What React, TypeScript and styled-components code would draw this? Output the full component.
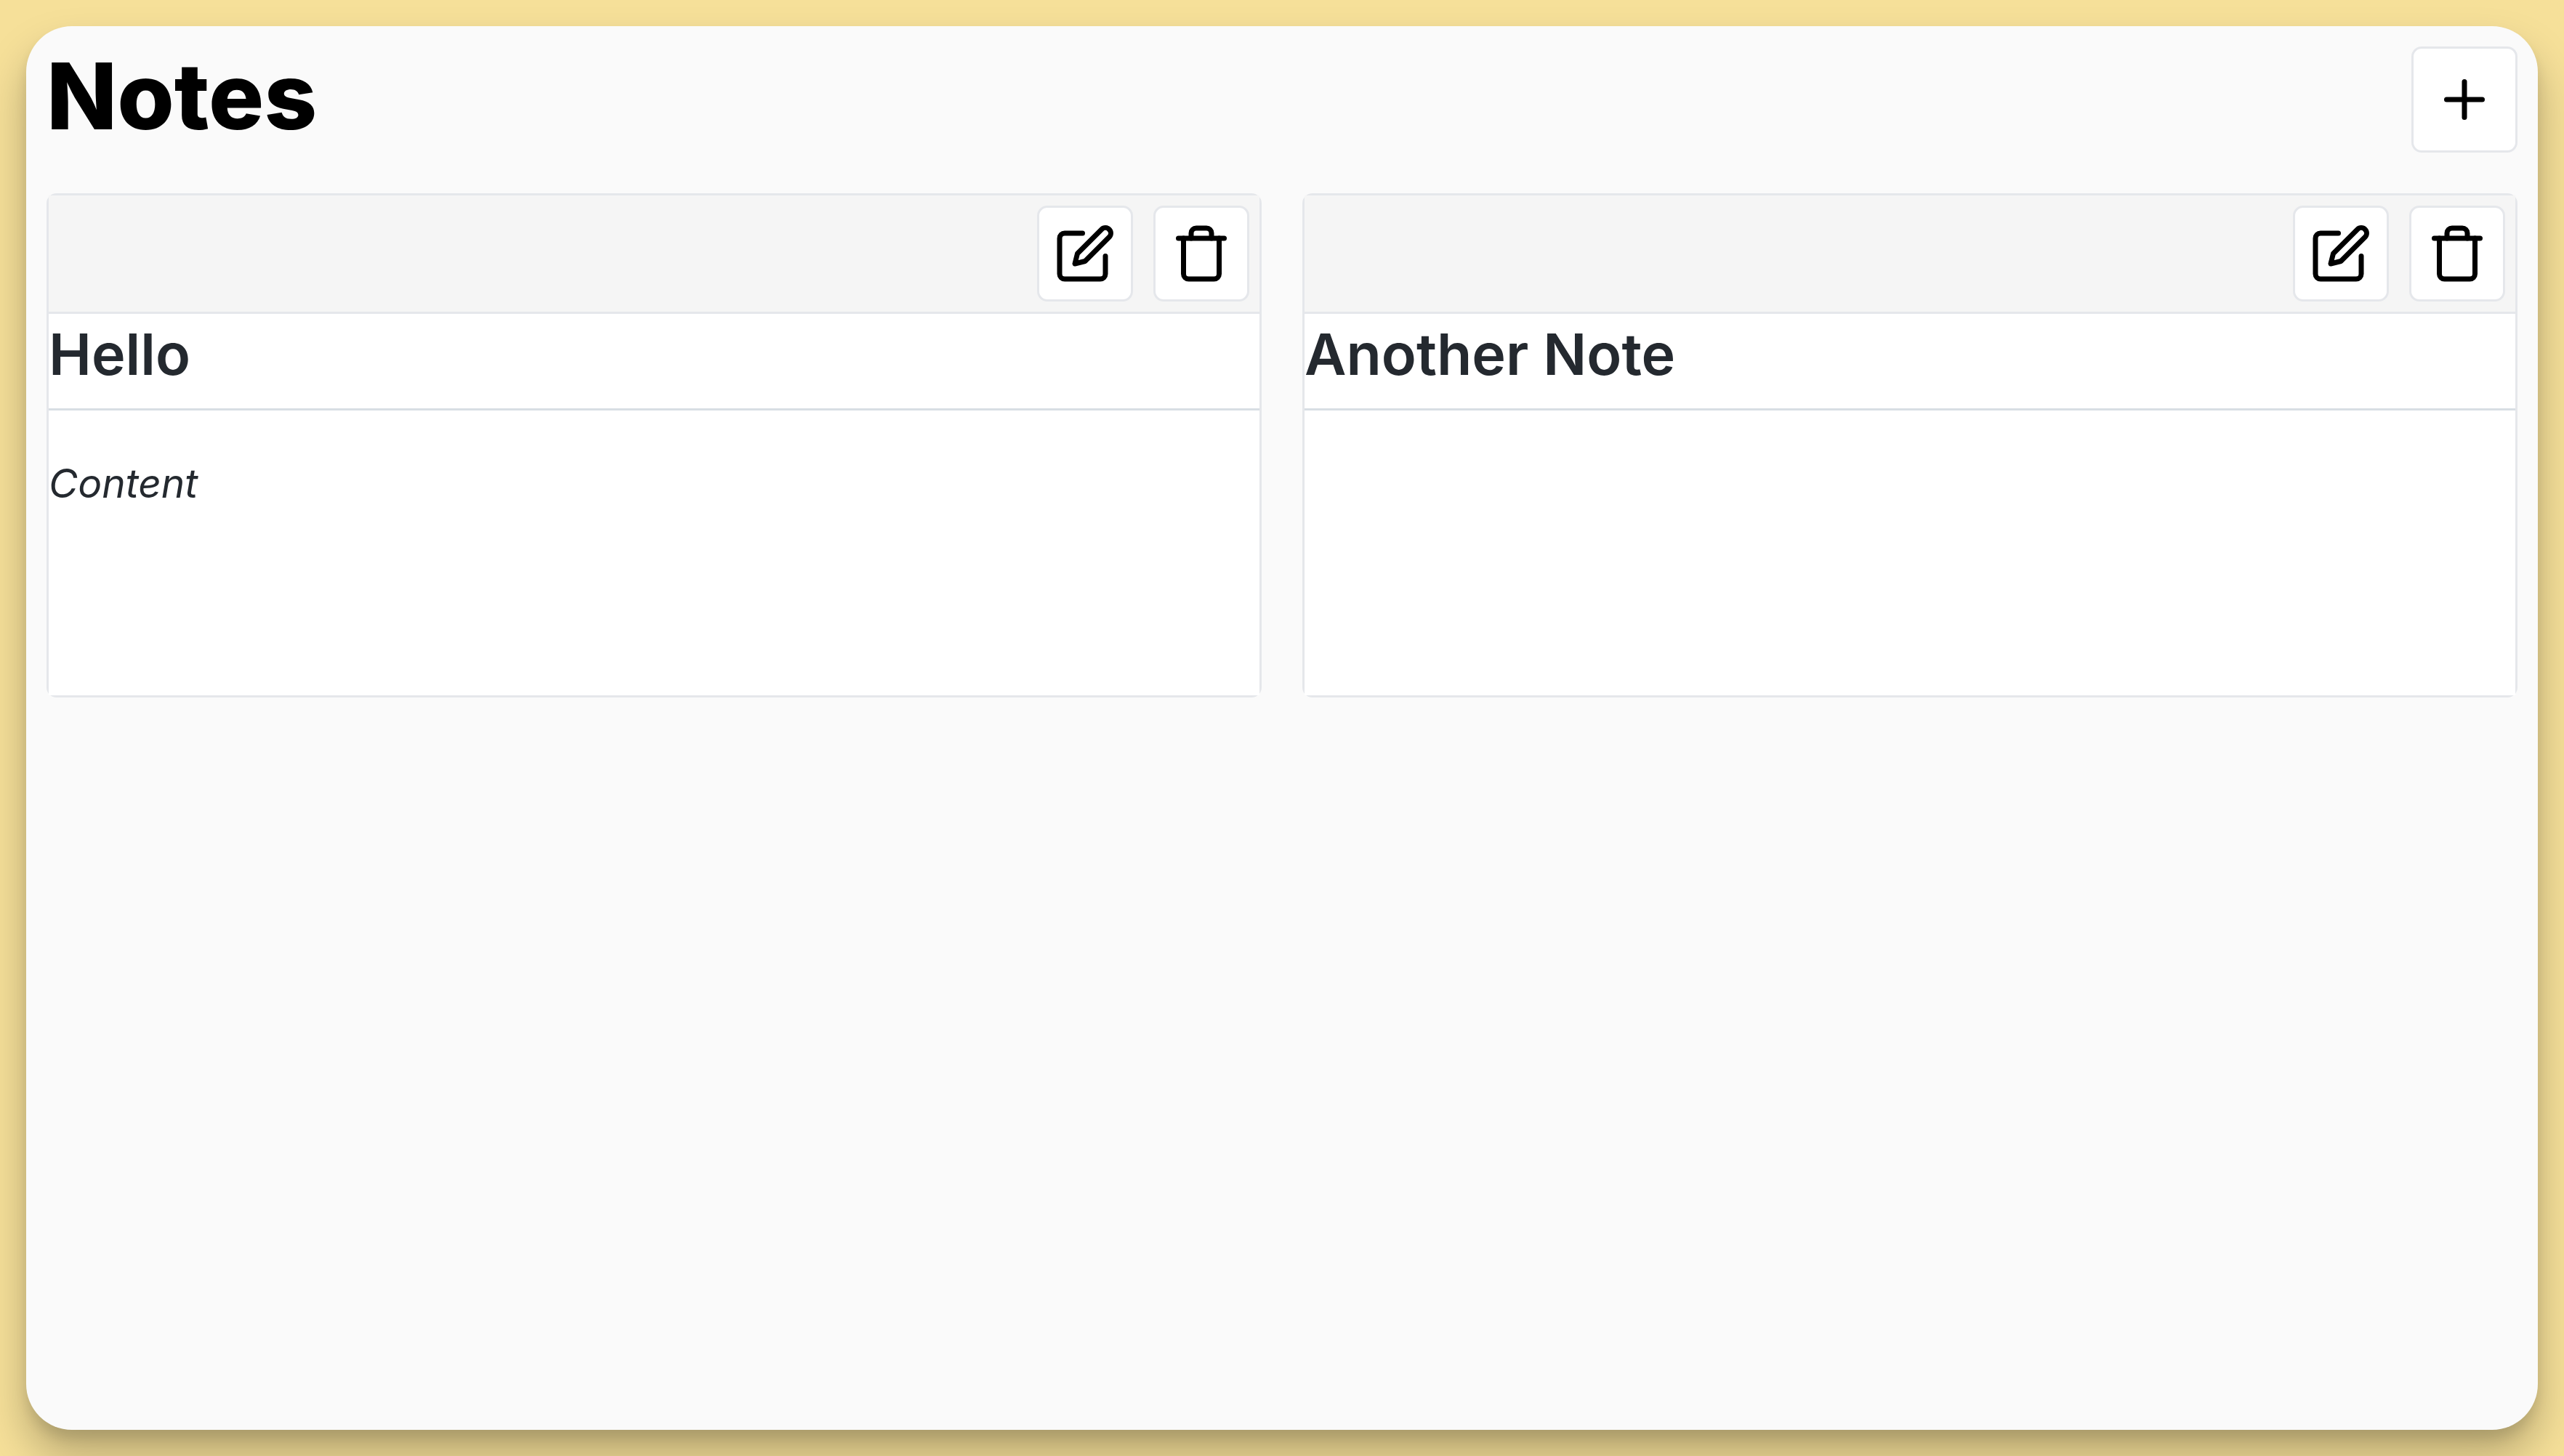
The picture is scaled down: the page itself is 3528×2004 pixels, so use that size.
import React from "react";
import styled, { createGlobalStyle } from "styled-components";
import { FiEdit, FiPlus, FiTrash } from "react-icons/fi";

const GlobalStyle = createGlobalStyle`
  *, *::before, *::after { box-sizing: border-box; }
  body {
    margin: 0;
    background: #f6e099;
    color: #24292f;
    font-family: Inter, "Liberation Sans", sans-serif;
  }
`;

const Page = styled.div`
  display: flex;
  min-height: 100vh;
  padding: 36px;
`;

const Panel = styled.main`
  flex: 1;
  display: flex;
  flex-direction: column;
  gap: 56px;
  padding: 28px;
  border-radius: 63px;
  background: #fafafa;
  box-shadow: 0 36px 60px rgba(0, 0, 0, 0.26), 0 12px 16px rgba(0, 0, 0, 0.09);
`;

const TopBar = styled.header`
  display: flex;
  align-items: flex-start;
  justify-content: space-between;
`;

const PageTitle = styled.h1`
  margin: 0;
  color: #000;
  font-size: 127px;
  font-weight: 800;
  line-height: 136px;
`;

const IconButton = styled.button<{ $pad: number }>`
  display: flex;
  padding: ${(p) => p.$pad}px;
  border: 3px solid #e5e7eb;
  border-radius: 14px;
  background: #fff;
  color: #000;
  font-size: 84px;
  cursor: pointer;
`;

const Grid = styled.section`
  display: grid;
  grid-template-columns: repeat(2, minmax(0, 1fr));
  gap: 56px;
`;

const Card = styled.article`
  display: flex;
  flex-direction: column;
  border: 3px solid #e5e7eb;
  border-radius: 14px;
`;

const Toolbar = styled.div`
  display: flex;
  justify-content: flex-end;
  gap: 28px;
  padding: 14px;
  border-bottom: 3px solid #e5e7eb;
  background: #f5f5f5;
`;

const NoteTitle = styled.h2`
  margin: 0;
  padding: 4px 0 24px;
  border-bottom: 3px solid #d8dee4;
  background: #fff;
  font-size: 79px;
  font-weight: 600;
  line-height: 102px;
`;

const NoteBody = styled.div`
  min-height: 392px;
  padding: 58px 0;
  background: #fff;
  font-size: 55px;
  line-height: 84px;
`;

interface Note {
  title: string;
  content: string;
}

const notes: Note[] = [
  { title: "Hello", content: "Content" },
  { title: "Another Note", content: "" },
];

function NoteCard({ note }: { note: Note }) {
  return (
    <Card>
      <Toolbar>
        <IconButton $pad={21} type="button" aria-label={`Edit ${note.title}`}>
          <FiEdit />
        </IconButton>
        <IconButton $pad={21} type="button" aria-label={`Delete ${note.title}`}>
          <FiTrash />
        </IconButton>
      </Toolbar>
      <NoteTitle>{note.title}</NoteTitle>
      <NoteBody>{note.content && <em>{note.content}</em>}</NoteBody>
    </Card>
  );
}

export default function App() {
  return (
    <>
      <GlobalStyle />
      <Page>
        <Panel>
          <TopBar>
            <PageTitle>Notes</PageTitle>
            <IconButton $pad={28} type="button" aria-label="Add note">
              <FiPlus />
            </IconButton>
          </TopBar>
          <Grid>
            {notes.map((note) => (
              <NoteCard key={note.title} note={note} />
            ))}
          </Grid>
        </Panel>
      </Page>
    </>
  );
}
